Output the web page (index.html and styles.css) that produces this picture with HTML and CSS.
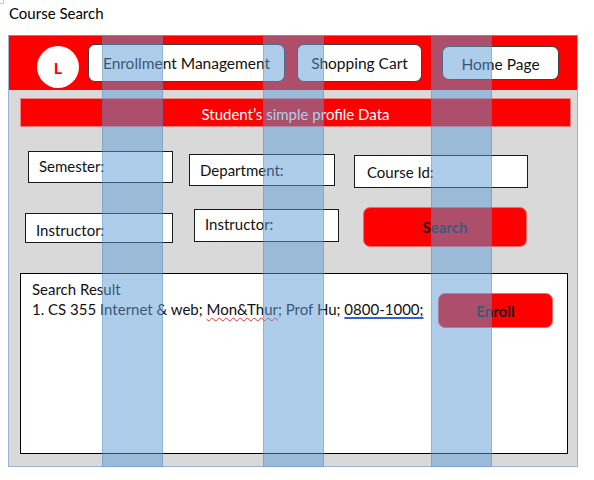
FILE: index.html
```html
<!DOCTYPE html>
<html>
<head>
<meta charset="utf-8">
<link rel="stylesheet" href="styles.css">
</head>
<body>
<div class="page">
  <div class="corner"></div>
  <div class="title">Course Search</div>
  <div class="frame">
    <div class="header">
      <div class="logo">L</div>
      <div class="navbtn nav-enroll">Enrollment Management</div>
      <div class="navbtn nav-cart">Shopping Cart</div>
      <div class="navbtn nav-home">Home Page</div>
    </div>
    <div class="body">
      <div class="profile">Student’s simple profile Data</div>
      <div class="row row1">
        <div class="field f-sem">Semester:</div>
        <div class="field f-dept">Department:</div>
        <div class="field f-course">Course Id:</div>
      </div>
      <div class="row row2">
        <div class="field f-inst1">Instructor:</div>
        <div class="field f-inst2">Instructor:</div>
        <div class="redbtn search">Search</div>
      </div>
      <div class="results">
        <div class="res-text">
          <div>Search Result</div>
          <div>1. CS 355 Internet &amp; web; <span class="spell">Mon&amp;Thur</span>; Prof Hu; <span class="link">0800-1000;</span></div>
        </div>
        <div class="redbtn enroll">Enroll</div>
      </div>
    </div>
  </div>
  <div class="stripe s1"></div>
  <div class="stripe s2"></div>
  <div class="stripe s3"></div>
</div>
</body>
</html>
```
FILE: styles.css
```css
html, body {
  margin: 0;
  padding: 0;
  background: #ffffff;
}
.page {
  position: relative;
  width: 594px;
  height: 480px;
  font-family: "Lato", "Open Sans", sans-serif;
  font-size: 15px;
  color: #000;
}
.corner {
  position: absolute;
  left: 0;
  top: 0;
  width: 3px;
  height: 3px;
  border-right: 1px solid #c8c8c8;
  border-bottom: 1px solid #c8c8c8;
}
.title {
  padding: 4px 0 0 9px;
  height: 35px;
  box-sizing: border-box;
  line-height: 18px;
}
.frame {
  margin-left: 8px;
  width: 570px;
  height: 432px;
  box-sizing: border-box;
  border: 1px solid #9db3d3;
  border-top: 1px solid #f06060;
  background: #d9d9d9;
}
.header {
  height: 54px;
  background: #ff0000;
  display: flex;
  align-items: center;
}
.logo {
  margin-left: 28px;
  margin-top: 8px;
  width: 42px;
  height: 42px;
  border-radius: 50%;
  background: #fff;
  color: #ff0000;
  font-weight: 700;
  font-size: 16px;
  display: flex;
  align-items: center;
  justify-content: center;
}
.navbtn {
  box-sizing: border-box;
  height: 38px;
  background: #fff;
  border: 1.5px solid #3f3f3f;
  border-radius: 7px;
  display: flex;
  align-items: center;
  justify-content: center;
  color: #111;
  font-size: 15.5px;
}
.nav-enroll { margin-left: 9px; width: 197px; }
.nav-cart { margin-left: 12px; width: 125px; }
.nav-home { margin-left: 20px; width: 117px; height: 34px; padding-top: 2px; }
.body {
  padding: 8px 0 0 0;
}
.profile {
  margin-left: 11px;
  width: 551px;
  height: 29px;
  box-sizing: border-box;
  background: #ff0000;
  border: 1px solid #f58080;
  color: #fff;
  display: flex;
  align-items: center;
  justify-content: center;
  padding-top: 2px;
}
.row {
  display: flex;
  align-items: flex-start;
}
.row1 { margin-top: 24px; height: 56px; }
.row2 { height: 66px; }
.field {
  box-sizing: border-box;
  background: #fff;
  border: 1.5px solid #1a1a1a;
  display: flex;
  align-items: center;
  padding-left: 10px;
  color: #111;
}
.f-sem { margin-left: 19px; width: 145px; height: 32px; padding-bottom: 3px; }
.f-dept { margin-left: 16px; margin-top: 3px; width: 146px; height: 32px; }
.f-course { margin-left: 19px; margin-top: 4px; width: 174px; height: 33px; padding-left: 12px; }
.f-inst1 { margin-left: 16px; margin-top: 6px; width: 148px; height: 30px; padding-top: 3px; }
.f-inst2 { margin-left: 21px; margin-top: 2px; width: 145px; height: 33px; padding-bottom: 3px; }
.redbtn {
  box-sizing: border-box;
  background: #ff0000;
  border: 1px solid #f26b6b;
  border-radius: 7px;
  display: flex;
  align-items: center;
  justify-content: center;
  font-weight: 700;
  color: #1a1a1a;
}
.search { margin-left: 24px; width: 164px; height: 40px; }
.results {
  margin-left: 11px;
  width: 548px;
  height: 181px;
  box-sizing: border-box;
  background: #fff;
  border: 1.5px solid #000;
  display: flex;
  align-items: flex-start;
}
.res-text {
  padding: 5px 0 0 11px;
  line-height: 20px;
  color: #111;
}
.spell {
  text-decoration: underline wavy #e03030;
  text-decoration-thickness: 1px;
  text-underline-offset: 2px;
}
.link {
  text-decoration: underline #2d62d6;
  text-decoration-thickness: 1.5px;
  text-underline-offset: 2px;
}
.enroll {
  margin-left: auto;
  margin-right: 14px;
  margin-top: 19px;
  width: 115px;
  height: 35px;
}
.stripe {
  position: absolute;
  top: 36px;
  width: 61px;
  height: 431px;
  box-sizing: border-box;
  background: rgba(91, 155, 213, 0.5);
  border-left: 1px solid rgba(65, 113, 156, 0.25);
  border-right: 1px solid rgba(65, 113, 156, 0.25);
}
.s1 { left: 102px; }
.s2 { left: 263px; }
.s3 { left: 431px; }
```
